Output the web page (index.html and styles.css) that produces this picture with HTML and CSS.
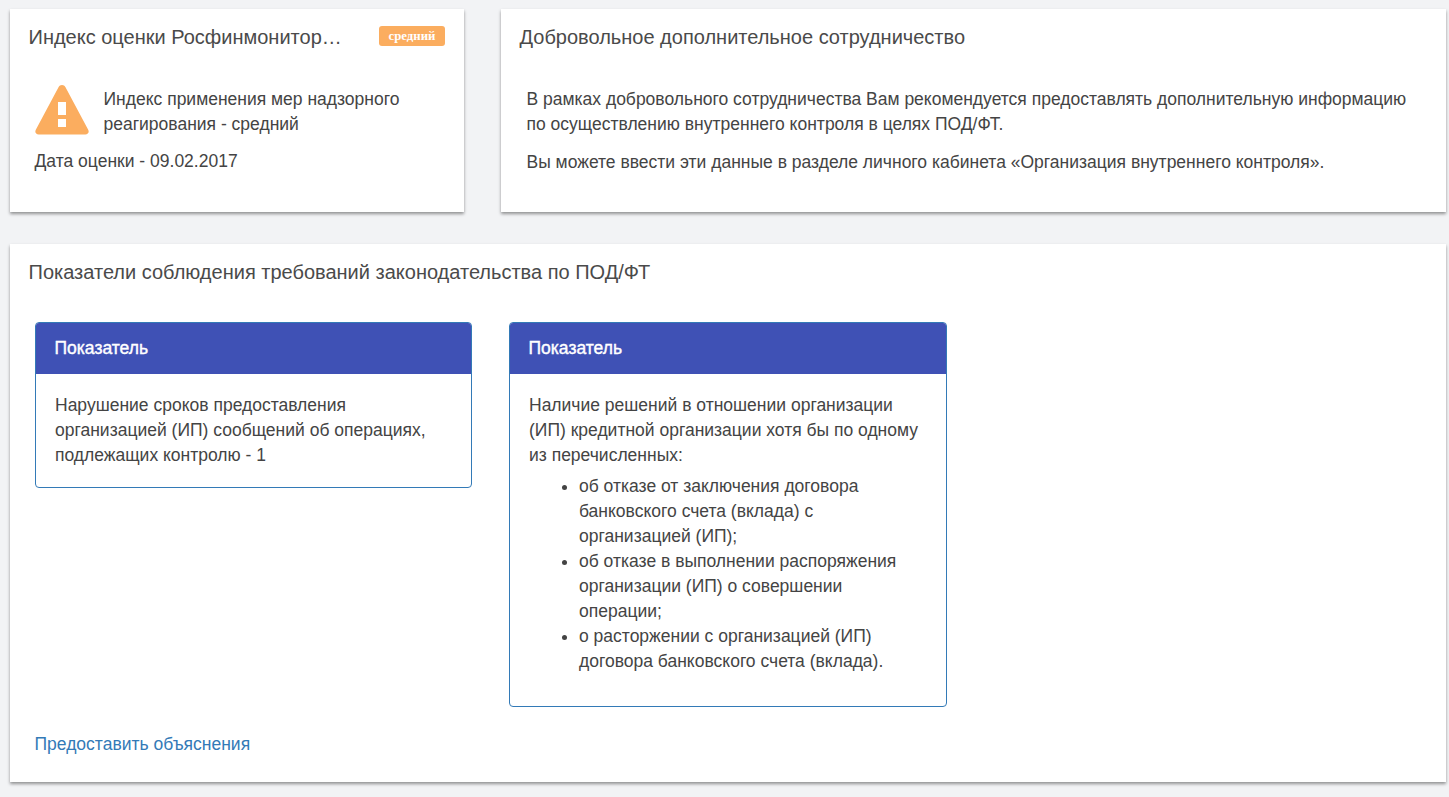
FILE: index.html
```html
<!DOCTYPE html>
<html lang="ru">
<head>
  <meta charset="UTF-8">
  <title>Показатели</title>
  <link rel="stylesheet" href="styles.css">
</head>
<body>
  <div class="top-row">
    <section class="card card-index">
      <div class="card-head">
        <h2 class="card-title">Индекс оценки Росфинмонитор…</h2>
        <span class="badge">средний</span>
      </div>
      <div class="index-body">
        <div class="index-level">
          <svg class="warn-icon" viewBox="0 0 54 50" width="54" height="50">
            <path fill="#fbad5f" fill-rule="evenodd" d="M27 0c1.500 0 2.700.8 3.500 2.200l22.700 42.600c1.300 2.400-.2 4.700-2.900 4.700H3.700C1 49.500-.5 47.200.8 44.800L23.500 2.200C24.300.8 25.500 0 27 0zM23 17v13h8V17h-8zm0 17v8h8v-8h-8z"/>
          </svg>
          <p class="index-text">Индекс применения мер надзорного реагирования - средний</p>
        </div>
        <p class="index-date">Дата оценки - 09.02.2017</p>
      </div>
    </section>

    <section class="card card-extra">
      <h2 class="card-title">Добровольное дополнительное сотрудничество</h2>
      <div class="extra-body">
        <p>В рамках добровольного сотрудничества Вам рекомендуется предоставлять дополнительную информацию по осуществлению внутреннего контроля в целях ПОД/ФТ.</p>
        <p>Вы можете ввести эти данные в разделе личного кабинета «Организация внутреннего контроля».</p>
      </div>
    </section>
  </div>

  <section class="card card-main">
    <h2 class="card-title">Показатели соблюдения требований законодательства по ПОД/ФТ</h2>
    <div class="panels">
      <div class="panel">
        <div class="panel-head">Показатель</div>
        <div class="panel-body">
          Нарушение сроков предоставления организацией (ИП) сообщений об операциях, подлежащих контролю - 1
        </div>
      </div>
      <div class="panel panel-long">
        <div class="panel-head">Показатель</div>
        <div class="panel-body">
          Наличие решений в отношении организации (ИП) кредитной организации хотя бы по одному из перечисленных:
          <ul class="panel-list">
            <li>об отказе от заключения договора банковского счета (вклада) с организацией (ИП);</li>
            <li>об отказе в выполнении распоряжения организации (ИП) о совершении операции;</li>
            <li>о расторжении с организацией (ИП) договора банковского счета (вклада).</li>
          </ul>
        </div>
      </div>
    </div>
    <a class="explain-link" href="#">Предоставить объяснения</a>
  </section>
</body>
</html>
```

FILE: styles.css
```css
* {
  margin: 0;
  padding: 0;
  box-sizing: border-box;
}

body {
  font-family: "Liberation Sans", Arial, sans-serif;
  font-size: 17.5px;
  line-height: 25px;
  color: #444444;
  background-color: #f2f3f5;
  padding: 9px 3px 15px 10px;
}

.top-row {
  display: flex;
  gap: 37px;
  margin-bottom: 32px;
}

.card {
  background-color: #ffffff;
  box-shadow: 0 2px 3px rgba(0, 0, 0, 0.4);
}

.card-title {
  font-size: 20px;
  font-weight: 400;
  line-height: 28px;
  color: #4a4a4a;
}

.card-index {
  width: 454px;
  height: 203px;
  padding: 14px 19px 0 18.5px;
}

.card-extra {
  flex: 1;
  height: 203px;
  padding: 14px 19px 0 18.5px;
}

.card-head {
  display: flex;
  justify-content: space-between;
  align-items: flex-start;
}

.badge {
  margin-top: 3px;
  width: 66px;
  height: 20px;
  background-color: #fbad5f;
  border-radius: 3px;
  color: #ffffff;
  font-family: "Liberation Serif", serif;
  font-size: 12.8px;
  font-weight: 700;
  line-height: 20px;
  text-align: center;
}

.index-body {
  padding: 34px 6px 0;
}

.index-level {
  display: flex;
  align-items: flex-start;
  gap: 15px;
}

.warn-icon {
  flex: none;
}

.index-text {
  margin-top: 2px;
}

.index-date {
  margin-top: 12px;
}

.extra-body {
  padding: 36px 7px 0;
}

.extra-body p {
  margin-bottom: 13px;
}

.card-main {
  height: 538px;
  padding: 14px 19px 0 18.5px;
}

.panels {
  display: flex;
  align-items: flex-start;
  gap: 37px;
  margin: 36px 0 0 6.5px;
}

.panel {
  width: 437px;
  background-color: #ffffff;
  border: 1px solid #337ab7;
  border-radius: 4px;
  overflow: hidden;
}

.panel-long {
  width: 438px;
}

.panel-head {
  height: 51px;
  padding: 0 18.5px;
  background-color: #3f51b5;
  color: #ffffff;
  -webkit-text-stroke: 0.4px #ffffff;
  line-height: 50px;
}

.panel-body {
  padding: 19px 19px 19px;
}

.panel-long .panel-body {
  padding-bottom: 22px;
}

.panel-list {
  list-style: disc;
  margin: 6px 0 10px;
  padding-left: 50px;
}

.explain-link {
  display: block;
  margin: 25px 0 0 6px;
  color: #337ab7;
  text-decoration: none;
}
```
